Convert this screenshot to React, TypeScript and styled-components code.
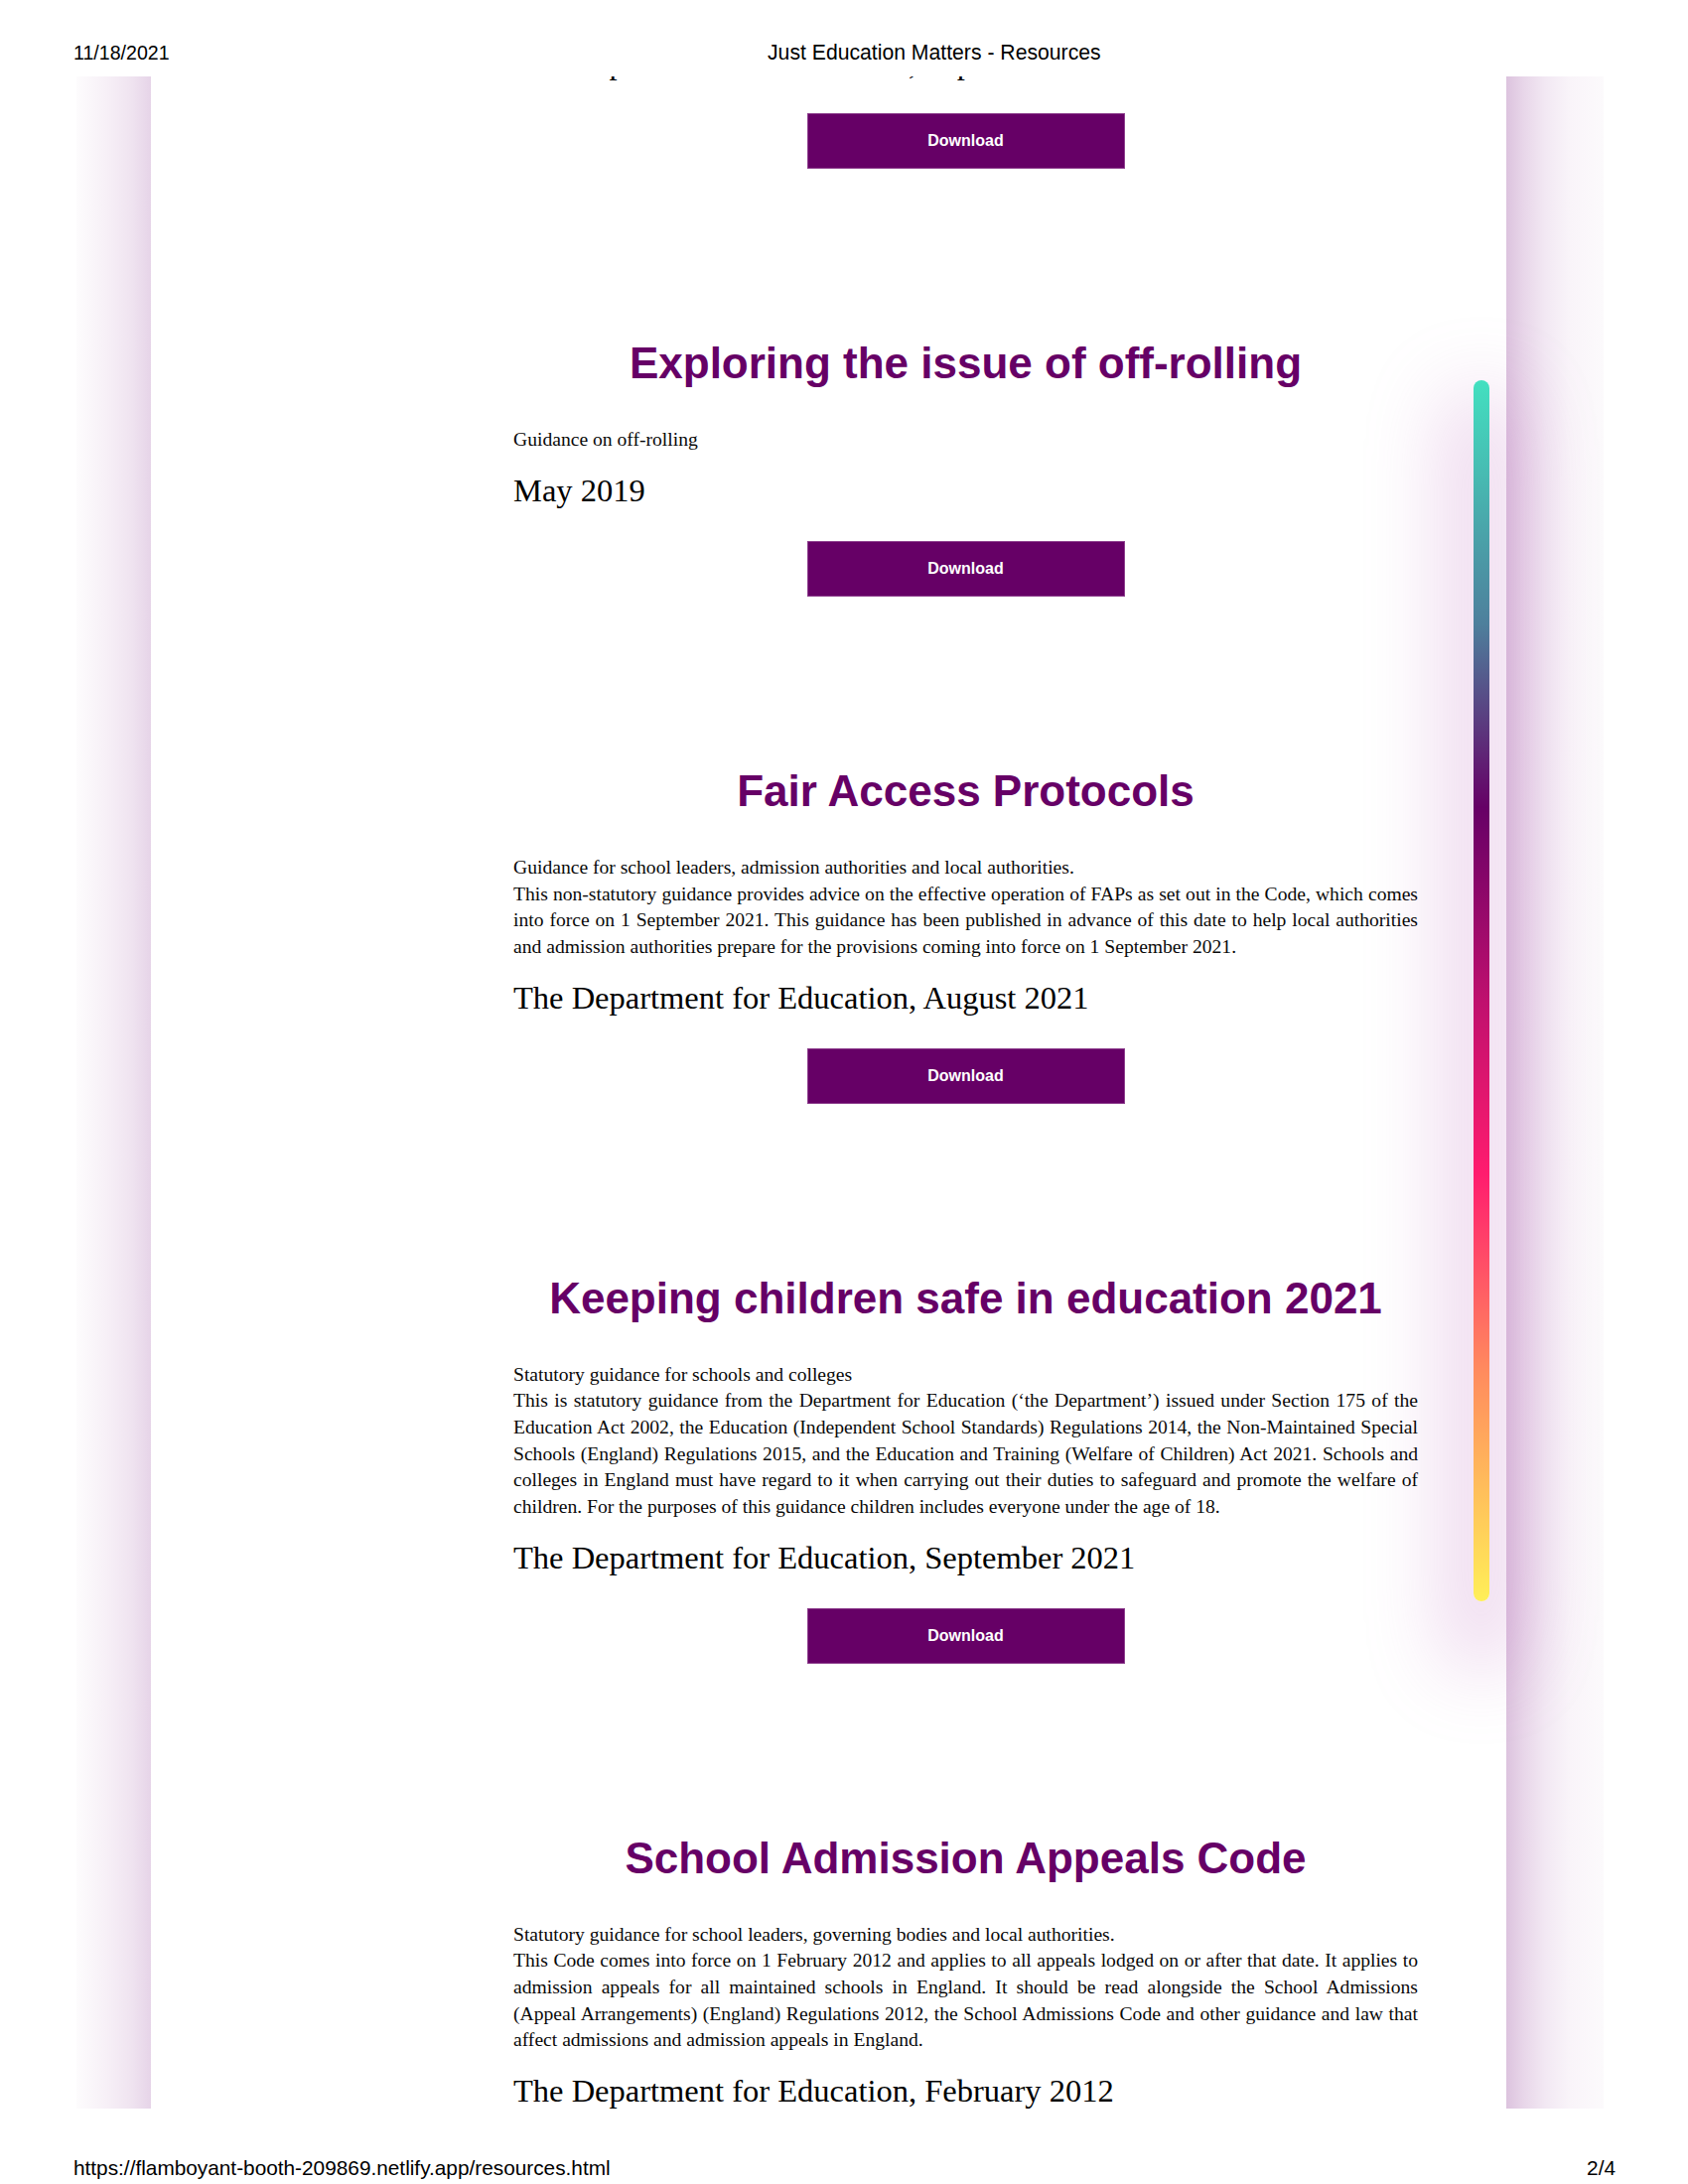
import React from "react";
import styled, { createGlobalStyle } from "styled-components";

const GlobalStyle = createGlobalStyle`
  html, body {
    margin: 0;
    padding: 0;
    background: #ffffff;
  }
  * { box-sizing: border-box; }
`;

const SANS = `"Liberation Sans", Arial, sans-serif`;
const SERIF = `"Liberation Serif", "Times New Roman", serif`;

const Page = styled.div`
  width: 1700px;
  height: 2200px;
  background: #ffffff;
  display: flex;
  flex-direction: column;
  overflow: hidden;
`;

const PrintBar = styled.div<{ $top: number }>`
  display: flex;
  align-items: flex-start;
  padding: ${(p) => p.$top}px 73px 0 74px;
  font-family: ${SANS};
  font-size: 20.8px;
  line-height: 24px;
  color: #000;
`;

const HeaderBar = styled(PrintBar)`
  height: 77px;
  flex: none;
`;

const FooterBar = styled(PrintBar)`
  justify-content: space-between;
  flex: 1;
`;

const PrintDate = styled.span`
  width: 699px;
  flex: none;
  font-size: 19.6px;
`;

const PrintTitle = styled.span`
  font-size: 21.2px;
`;

const Sheet = styled.div`
  position: relative;
  margin-left: 77px;
  width: 1538px;
  height: 2047px;
  flex: none;
  overflow: hidden;
  background: #ffffff;
  display: flex;
`;

const LeftGutter = styled.div`
  width: 75px;
  flex: none;
  background: linear-gradient(
    to right,
    #fdfcfd 0%,
    #f7f0f7 40%,
    #efe3f0 75%,
    #e6d4e8 100%
  );
`;

const RightGutter = styled.div`
  width: 98px;
  flex: none;
  background: linear-gradient(
    to right,
    #dcc3de 0%,
    #e8d6e9 18%,
    #f2e8f3 40%,
    #f9f4f9 65%,
    #fcfafc 100%
  );
`;

const Column = styled.main`
  position: relative;
  z-index: 1;
  width: 1365px;
  flex: none;
  padding: 0 89px 0 365px;
`;

const Flow = styled.div`
  margin-top: -33.8px;
  display: flex;
  flex-direction: column;
`;

const ScrollTrack = styled.div`
  position: absolute;
  z-index: 0;
  left: 1407px;
  top: 306px;
  width: 16px;
  height: 1230px;
  border-radius: 8px;
  background: linear-gradient(
    to bottom,
    #43e0c0 0%,
    #4e7f9c 20%,
    #660066 35%,
    #c0106e 51%,
    #ff1c6e 65%,
    #ff8a5e 81%,
    #ffef58 100%
  );
  box-shadow: 0 40px 80px 28px rgba(196, 120, 196, 0.32);
`;

const Section = styled.section`
  display: flex;
  flex-direction: column;
  padding-top: 170px;
`;

const Title = styled.h2`
  margin: 0 0 38px;
  font-family: ${SANS};
  font-weight: 700;
  font-size: 44px;
  line-height: 52px;
  color: #660066;
  text-align: center;
`;

const Desc = styled.p`
  margin: 0 0 17px;
  font-family: ${SERIF};
  font-size: 19.6px;
  line-height: 26.67px;
  color: #0a0a0a;
  text-align: justify;
`;

const DateLine = styled.p`
  margin: 0 0 31px;
  font-family: ${SERIF};
  font-size: 32.5px;
  line-height: 40px;
  color: #000;
`;

const DownloadButton = styled.button`
  align-self: center;
  width: 320px;
  height: 56px;
  background: #660066;
  border: 1px solid #8d3f8d;
  border-radius: 0;
  color: #ffffff;
  font-family: ${SANS};
  font-weight: 700;
  font-size: 16px;
  cursor: pointer;
  padding: 0;
`;

type Item = {
  title: string;
  lead: string;
  body?: string;
  date: string;
};

const items: Item[] = [
  {
    title: "Exploring the issue of off-rolling",
    lead: "Guidance on off-rolling",
    date: "May 2019",
  },
  {
    title: "Fair Access Protocols",
    lead: "Guidance for school leaders, admission authorities and local authorities.",
    body:
      "This non-statutory guidance provides advice on the effective operation of FAPs as set out in the Code, which comes into force on 1 September 2021. This guidance has been published in advance of this date to help local authorities and admission authorities prepare for the provisions coming into force on 1 September 2021.",
    date: "The Department for Education, August 2021",
  },
  {
    title: "Keeping children safe in education 2021",
    lead: "Statutory guidance for schools and colleges",
    body:
      "This is statutory guidance from the Department for Education (\u2018the Department\u2019) issued under Section 175 of the Education Act 2002, the Education (Independent School Standards) Regulations 2014, the Non-Maintained Special Schools (England) Regulations 2015, and the Education and Training (Welfare of Children) Act 2021. Schools and colleges in England must have regard to it when carrying out their duties to safeguard and promote the welfare of children. For the purposes of this guidance children includes everyone under the age of 18.",
    date: "The Department for Education, September 2021",
  },
  {
    title: "School Admission Appeals Code",
    lead: "Statutory guidance for school leaders, governing bodies and local authorities.",
    body:
      "This Code comes into force on 1 February 2012 and applies to all appeals lodged on or after that date. It applies to admission appeals for all maintained schools in England. It should be read alongside the School Admissions (Appeal Arrangements) (England) Regulations 2012, the School Admissions Code and other guidance and law that affect admissions and admission appeals in England.",
    date: "The Department for Education, February 2012",
  },
];

function Resource({ item }: { item: Item }) {
  return (
    <Section>
      <Title>{item.title}</Title>
      <Desc>
        {item.lead}
        {item.body && (
          <>
            <br />
            {item.body}
          </>
        )}
      </Desc>
      <DateLine>{item.date}</DateLine>
      <DownloadButton type="button">Download</DownloadButton>
    </Section>
  );
}

export default function App() {
  return (
    <>
      <GlobalStyle />
      <Page>
        <HeaderBar $top={41}>
          <PrintDate>11/18/2021</PrintDate>
          <PrintTitle>Just Education Matters - Resources</PrintTitle>
        </HeaderBar>
        <Sheet>
          <LeftGutter />
          <Column>
            <Flow>
              <DateLine>The Department for Education, September 2018</DateLine>
              <DownloadButton type="button">Download</DownloadButton>
              {items.map((it) => (
                <Resource key={it.title} item={it} />
              ))}
            </Flow>
          </Column>
          <RightGutter />
          <ScrollTrack />
        </Sheet>
        <FooterBar $top={48}>
          <span>https://flamboyant-booth-209869.netlify.app/resources.html</span>
          <span>2/4</span>
        </FooterBar>
      </Page>
    </>
  );
}
